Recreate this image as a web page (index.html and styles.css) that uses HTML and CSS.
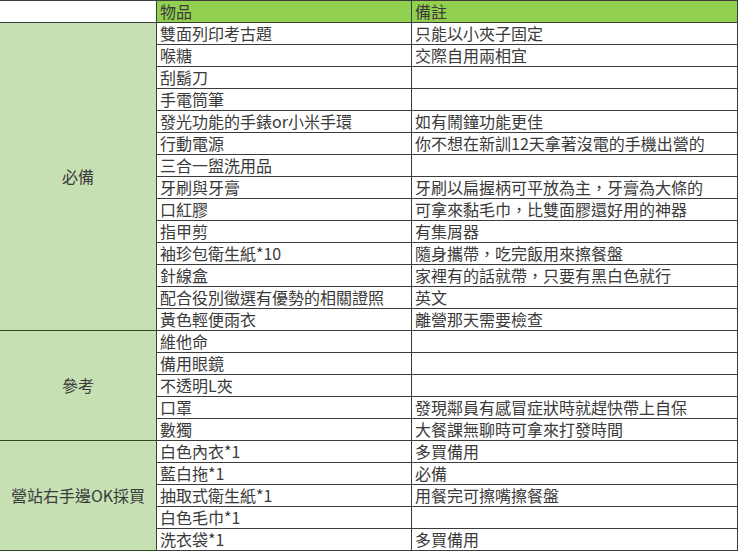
FILE: index.html
```html
<!DOCTYPE html>
<html lang="zh-Hant">
<head>
<meta charset="utf-8">
<link rel="stylesheet" href="styles.css">
</head>
<body>
<table class="list">
<colgroup><col class="c1"><col class="c2"><col class="c3"></colgroup>
<tr class="head"><td class="blank"></td><td>物品</td><td>備註</td></tr>
<tr><td class="group" rowspan="14">必備</td><td>雙面列印考古題</td><td>只能以小夾子固定</td></tr>
<tr><td>喉糖</td><td>交際自用兩相宜</td></tr>
<tr><td>刮鬍刀</td><td></td></tr>
<tr><td>手電筒筆</td><td></td></tr>
<tr><td>發光功能的手錶or小米手環</td><td>如有鬧鐘功能更佳</td></tr>
<tr><td>行動電源</td><td>你不想在新訓12天拿著沒電的手機出營的</td></tr>
<tr><td>三合一盥洗用品</td><td></td></tr>
<tr><td>牙刷與牙膏</td><td>牙刷以扁握柄可平放為主，牙膏為大條的</td></tr>
<tr><td>口紅膠</td><td>可拿來黏毛巾，比雙面膠還好用的神器</td></tr>
<tr><td>指甲剪</td><td>有集屑器</td></tr>
<tr><td>袖珍包衛生紙*10</td><td>隨身攜帶，吃完飯用來擦餐盤</td></tr>
<tr><td>針線盒</td><td>家裡有的話就帶，只要有黑白色就行</td></tr>
<tr><td>配合役別徵選有優勢的相關證照</td><td>英文</td></tr>
<tr><td>黃色輕便雨衣</td><td>離營那天需要檢查</td></tr>
<tr><td class="group" rowspan="5">參考</td><td>維他命</td><td></td></tr>
<tr><td>備用眼鏡</td><td></td></tr>
<tr><td>不透明L夾</td><td></td></tr>
<tr><td>口罩</td><td>發現鄰員有感冒症狀時就趕快帶上自保</td></tr>
<tr><td>數獨</td><td>大餐課無聊時可拿來打發時間</td></tr>
<tr><td class="group" rowspan="5">營站右手邊OK採買</td><td>白色內衣*1</td><td>多買備用</td></tr>
<tr><td>藍白拖*1</td><td>必備</td></tr>
<tr><td>抽取式衛生紙*1</td><td>用餐完可擦嘴擦餐盤</td></tr>
<tr><td>白色毛巾*1</td><td></td></tr>
<tr><td>洗衣袋*1</td><td>多買備用</td></tr>
</table>
</body>
</html>
```
FILE: styles.css
```css
html, body {
  margin: 0;
  padding: 0;
  background: #ffffff;
}
body {
  font-family: "Noto Sans CJK TC", "Noto Sans", sans-serif;
  font-size: 16px;
  color: #3a3a3a;
}
.list {
  border-collapse: collapse;
  table-layout: fixed;
  width: 738px;
  margin-left: -1px;
}
.c1 { width: 157px; }
.c2 { width: 255px; }
.c3 { width: 326px; }
.list td {
  border: 1px solid #3c3c3c;
  height: 21px;
  padding: 0 3px;
  line-height: 21px;
  white-space: nowrap;
  overflow: hidden;
  box-sizing: border-box;
  vertical-align: middle;
}
.head td {
  background: #92d050;
}
.head td.blank {
  background: #ffffff;
}
.list td.group {
  background: #c6e0b4;
  text-align: center;
  border-color: #2f4a22;
}
```
